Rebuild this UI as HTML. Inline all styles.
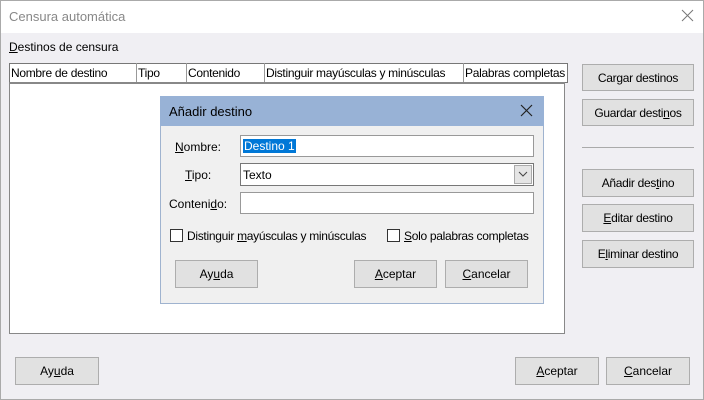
<!DOCTYPE html><html><head><style>
*{box-sizing:border-box;margin:0;padding:0}
body{width:704px;height:400px;overflow:hidden;font-family:"Liberation Sans",sans-serif;font-size:12px;color:#000;background:#efeff2;position:relative}
.a{position:absolute}
.win{left:0;top:0;width:704px;height:400px;border:1px solid #aaa;background:#f0eff3}
.btn{position:absolute;background:#e1e1e1;border:1px solid #adadad;text-align:center;font-size:12px;display:flex;align-items:center;justify-content:center}
.inp{position:absolute;background:#fff;border:1px solid #999}
u{text-decoration:underline}
.cb{display:inline-block;width:13px;height:13px;border:1px solid #333;background:#fff;vertical-align:-2px;margin-right:4px}
.n{letter-spacing:-0.3px}
</style></head><body>
<div class="a win"></div>
<div class="a" style="left:1px;top:1px;width:702px;height:32px;background:#fff"></div>
<div class="a" style="left:9px;top:9px;font-size:13px;color:#888">Censura automática</div>
<svg class="a" style="left:681px;top:9px" width="13" height="13"><path d="M1 1L12 12M12 1L1 12" stroke="#777" stroke-width="1"/></svg>
<div class="a" style="left:9px;top:40px"><u>D</u>estinos de censura</div>
<div class="a" style="left:9px;top:63px;width:559px;height:20px;background:#fff;border:1px solid #777"></div>
<div class="a" style="left:9px;top:82px;width:556px;height:252px;background:#fff;border:1px solid #888;border-top:2px solid #888"></div>
<div class="a n" style="left:11px;top:66px">Nombre de destino</div>
<div class="a" style="left:136px;top:63px;width:1px;height:19px;background:#999"></div>
<div class="a n" style="left:138px;top:66px">Tipo</div>
<div class="a" style="left:186px;top:63px;width:1px;height:19px;background:#999"></div>
<div class="a n" style="left:188px;top:66px">Contenido</div>
<div class="a" style="left:264px;top:63px;width:1px;height:19px;background:#999"></div>
<div class="a n" style="left:266px;top:66px">Distinguir mayúsculas y minúsculas</div>
<div class="a" style="left:463px;top:63px;width:1px;height:19px;background:#999"></div>
<div class="a n" style="left:465px;top:66px">Palabras completas</div>
<div class="btn n" style="left:582px;top:64px;width:112px;height:27px">Car<u>g</u>ar destinos</div>
<div class="btn n" style="left:582px;top:99px;width:112px;height:27px">Guardar desti<u>n</u>os</div>
<div class="a" style="left:582px;top:147px;width:112px;height:1px;background:#aaa"></div>
<div class="btn n" style="left:582px;top:169px;width:112px;height:28px">Añadir des<u>t</u>ino</div>
<div class="btn n" style="left:582px;top:204px;width:112px;height:28px"><u>E</u>ditar destino</div>
<div class="btn n" style="left:582px;top:240px;width:112px;height:28px">E<u>l</u>iminar destino</div>
<div class="btn" style="left:15px;top:357px;width:84px;height:28px">Ay<u>u</u>da</div>
<div class="btn" style="left:515px;top:357px;width:84px;height:28px"><u>A</u>ceptar</div>
<div class="btn" style="left:606px;top:357px;width:84px;height:28px"><u>C</u>ancelar</div>

<div class="a" style="left:160px;top:96px;width:384px;height:208px;background:#f0f0f0;border:1px solid #9fb3cf"></div>
<div class="a" style="left:160px;top:96px;width:384px;height:30px;background:#98b2d6"></div>
<div class="a" style="left:169px;top:104px;font-size:13px">Añadir destino</div>
<svg class="a" style="left:520px;top:104px" width="13" height="13"><path d="M1 1L12 12M12 1L1 12" stroke="#222" stroke-width="1.2"/></svg>
<div class="a" style="left:175px;top:140px"><u>N</u>ombre:</div>
<div class="inp" style="left:240px;top:135px;width:294px;height:22px"></div>
<div class="a" style="left:243px;top:139px;background:#0078d7;color:#fff;padding:0 1px">Destino 1</div>
<div class="a" style="left:185px;top:168px"><u>T</u>ipo:</div>
<div class="inp" style="left:240px;top:163px;width:294px;height:23px;border-color:#777"></div>
<div class="a" style="left:243px;top:168px">Texto</div>
<div class="a" style="left:514px;top:165px;width:18px;height:19px;background:#e5e5e5;border:1px solid #aaa"></div>
<svg class="a" style="left:518px;top:171px" width="10" height="6"><path d="M1 1L5 5L9 1" stroke="#444" fill="none"/></svg>
<div class="a" style="left:169px;top:197px">Conteni<u>d</u>o:</div>
<div class="inp" style="left:240px;top:192px;width:294px;height:22px"></div>
<div class="a n" style="left:170px;top:229px"><span class="cb"></span>Distinguir <u>m</u>ayúsculas y minúsculas</div>
<div class="a n" style="left:387px;top:229px"><span class="cb"></span><u>S</u>olo palabras completas</div>
<div class="btn" style="left:175px;top:260px;width:83px;height:28px">Ay<u>u</u>da</div>
<div class="btn" style="left:354px;top:260px;width:83px;height:28px"><u>A</u>ceptar</div>
<div class="btn" style="left:445px;top:260px;width:83px;height:28px"><u>C</u>ancelar</div>
</body></html>
